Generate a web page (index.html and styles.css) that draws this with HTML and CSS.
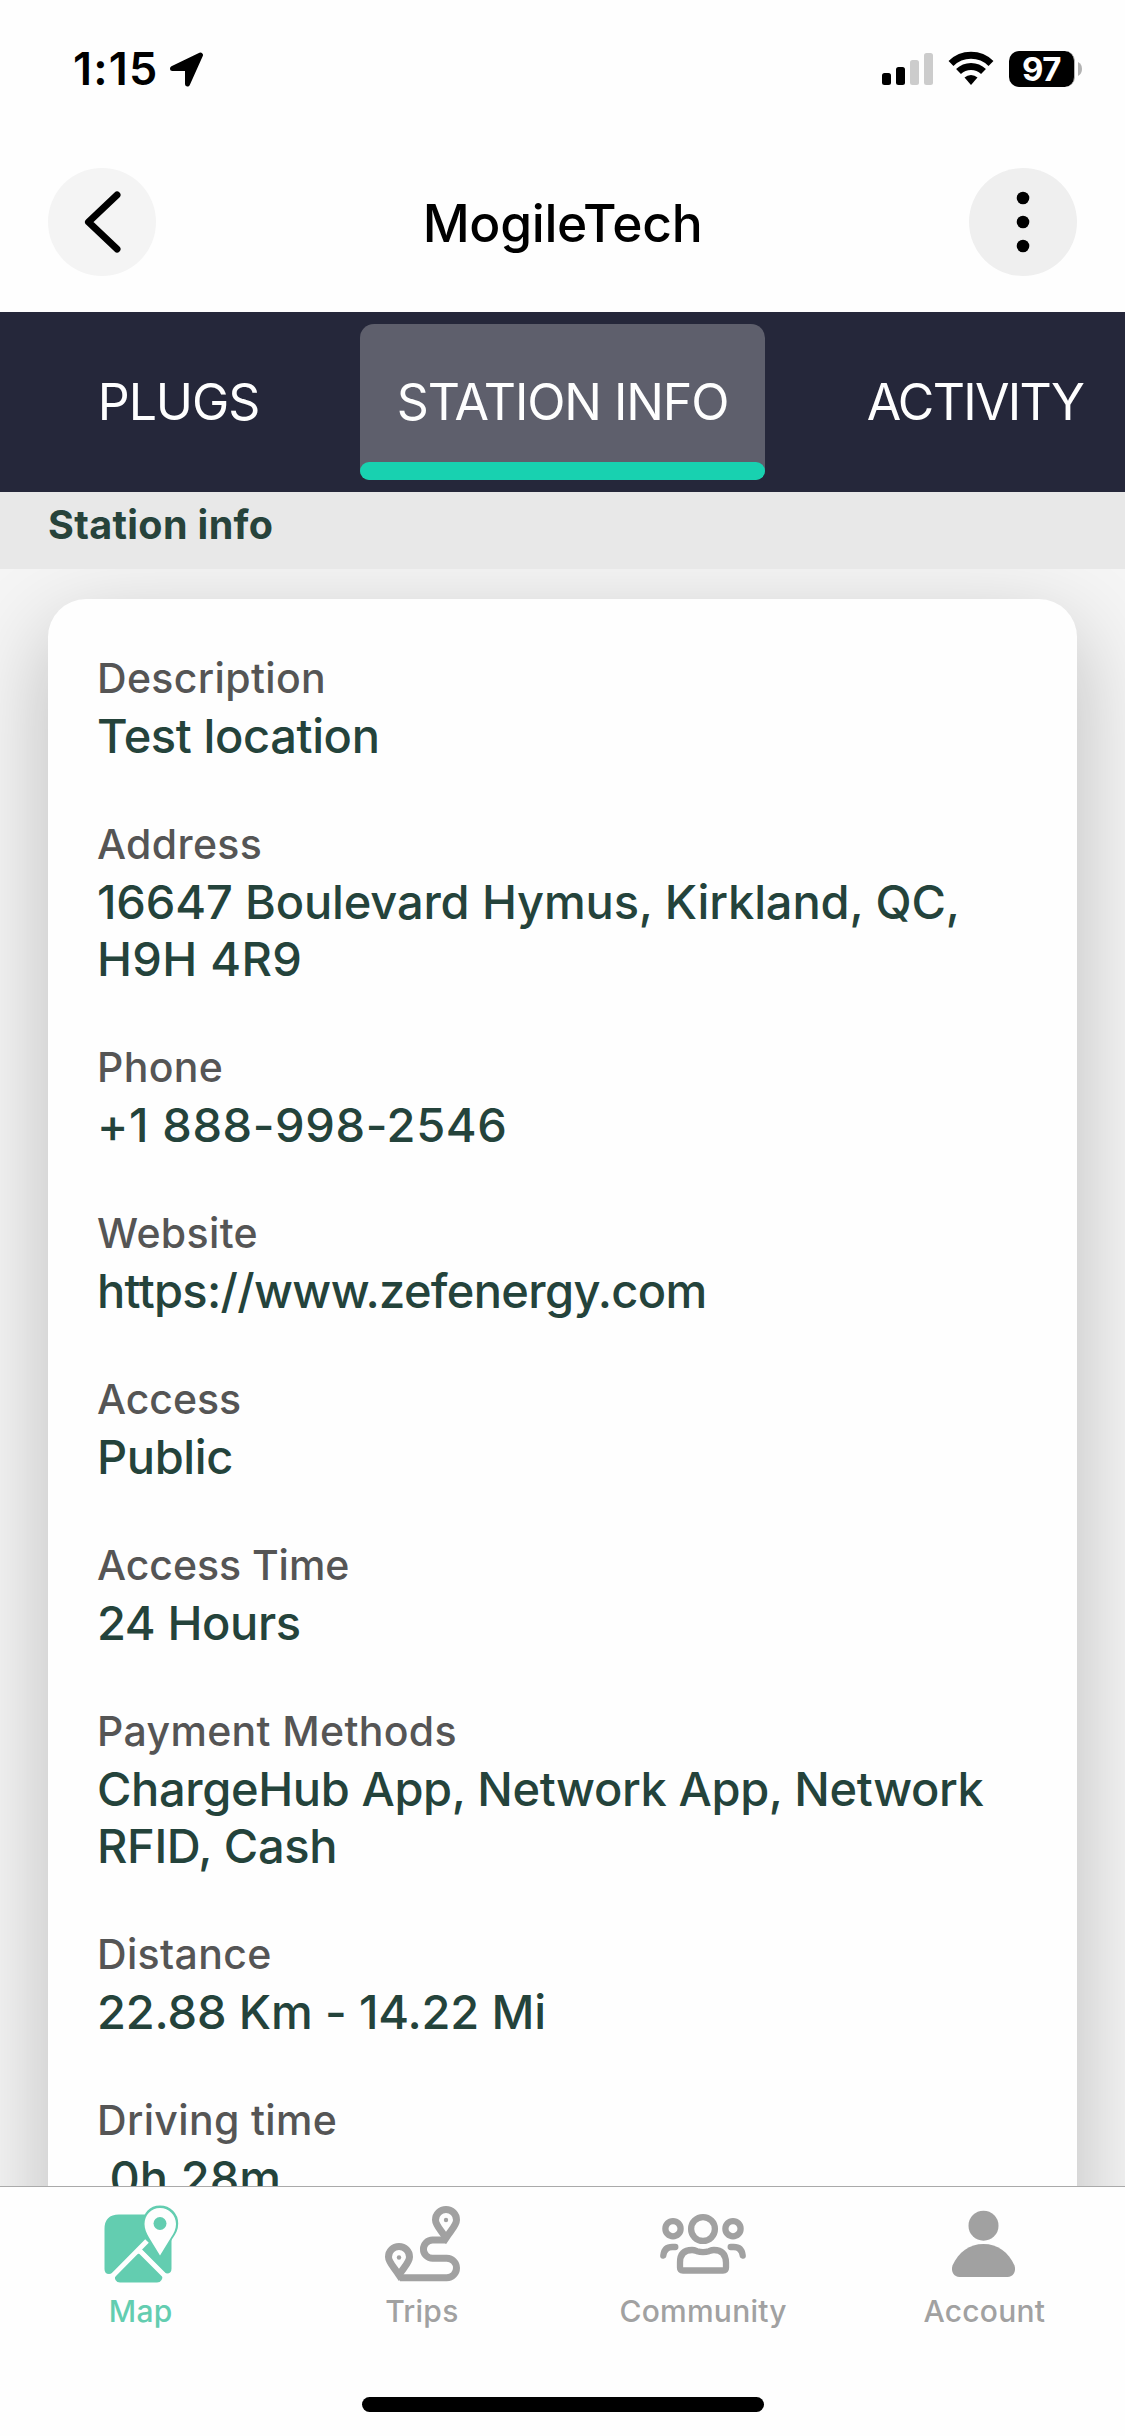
FILE: index.html
```html
<!DOCTYPE html>
<html lang="en">
<head>
<meta charset="utf-8">
<title>MogileTech</title>
<link rel="stylesheet" href="styles.css">
</head>
<body>
<div class="screen">
  <div class="status">
    <div class="status-left">
      <span class="clock">1:15</span>
      <svg class="location" width="36" height="38" viewBox="0 0 36 38"><path d="M3.500 19.500 31.500 6 18.500 35 18.500 19.500Z" stroke="#000" stroke-width="5" stroke-linejoin="round"/></svg>
    </div>
    <div class="status-right">
      <svg width="51" height="36" viewBox="0 0 51 36"><rect y="22" width="9" height="12" rx="2.500"/><rect x="14" y="16" width="9" height="18" rx="2.500"/><g fill="#ccc"><rect x="28" y="9" width="9" height="25" rx="2.500"/><rect x="42" y="2" width="9" height="32" rx="2.500"/></g></svg>
      <svg width="46" height="36" viewBox="0 0 46 36"><g fill="none" stroke="#000" stroke-width="7"><path d="M3 12.500a28.500 28.500 0 0 1 40 0"/><path d="M10.500 20.500a18 18 0 0 1 25 0"/></g><path d="M16.500 26.500a9.500 9.500 0 0 1 13 0L23 34Z"/></svg>
      <div class="battery"><span class="battery-level">97</span></div>
      <svg class="battery-cap" width="4" height="14" viewBox="0 0 4 14"><path d="M0 0q4 2 4 7t-4 7Z" fill="#b3b3b3"/></svg>
    </div>
  </div>

  <header class="header">
    <div class="round-button">
      <svg width="108" height="108" viewBox="0 0 108 108"><path d="M69 27 40.500 54 69 81" fill="none" stroke="#000" stroke-width="7" stroke-linecap="round" stroke-linejoin="round"/></svg>
    </div>
    <h1 class="title">MogileTech</h1>
    <div class="round-button menu-button">
      <svg width="108" height="108" viewBox="0 0 108 108"><circle cx="54" cy="30" r="6.300"/><circle cx="54" cy="54" r="6.300"/><circle cx="54" cy="78" r="6.300"/></svg>
    </div>
  </header>

  <nav class="tabs">
    <div class="tab first"><span class="tab-text plugs">PLUGS</span></div>
    <div class="tab active"><span class="tab-text station">STATION INFO</span></div>
    <div class="tab"><span class="tab-text activity">ACTIVITY</span></div>
  </nav>
  <h2 class="section">Station info</h2>

  <main class="content">
    <dl class="card">
      <div class="field description"><dt>Description</dt><dd>Test location</dd></div>
      <div class="field address"><dt>Address</dt><dd>16647 Boulevard Hymus, Kirkland, QC,<br><span class="postcode">H9H 4R9</span></dd></div>
      <div class="field phone"><dt>Phone</dt><dd>+1 888-998-2546</dd></div>
      <div class="field website"><dt>Website</dt><dd>https://www.zefenergy.com</dd></div>
      <div class="field access"><dt>Access</dt><dd>Public</dd></div>
      <div class="field access"><dt>Access Time</dt><dd>24 Hours</dd></div>
      <div class="field payment"><dt>Payment Methods</dt><dd>ChargeHub App, Network App, Network<br>RFID, Cash</dd></div>
      <div class="field distance"><dt>Distance</dt><dd>22.88 Km - 14.22 Mi</dd></div>
      <div class="field"><dt>Driving time</dt><dd>&nbsp;0h 28m</dd></div>
    </dl>
  </main>

  <footer class="bottom">
    <nav class="bottom-nav">
      <div class="nav-item selected">
        <svg width="90" height="90" viewBox="0 0 90 90"><path d="M23 15.500H60L75.500 40V69.500Q75.500 74.500 71 74.500 69 74.500 67 72.500L43 48 18 72.500Q16 75 13 75 8.500 75 8.500 70V30Q8.500 15.500 23 15.500Z" fill="currentColor"/><path d="M20.500 75.500 40 56Q43 53 46 56L65 75Q67.500 78 65.500 81 64 83.500 61 83.500H24Q21 83.500 19.500 81 18 78 20.500 75.500Z" fill="currentColor"/><path d="M15 78.500 51 42M42.500 50.500 70.500 78.500" stroke="#fefefe" stroke-width="5"/><path d="M64 7.500C54 7.500 47.700 15 47.700 24.500 47.700 31 50 35 53 40L64 59 75 40C79 34 81.200 31 81.200 24.500 81.200 15 74 7.500 64 7.500Z" fill="currentColor" stroke="currentColor" stroke-width="2"/><path d="M64 9C55 9 48.500 16 48.500 25 48.500 30 50.500 34 53 38.500L64 56.500 75 38.500C78 34 80 30 80 25 80 16 73 9 64 9Z" fill="#fefefe"/><circle cx="64" cy="24.500" r="6.500" fill="currentColor"/></svg>
        <span>Map</span>
      </div>
      <div class="nav-item">
        <svg width="90" height="90" viewBox="0 0 90 90"><g fill="none" stroke="currentColor" stroke-width="7"><path d="M69 10.500A10.500 10.500 0 0 0 58.500 21C58.500 26 63 30 69 39 75 30 79.500 26 79.500 21A10.500 10.500 0 0 0 69 10.500ZM22 47.500A10.500 10.500 0 0 0 11.500 58C11.500 63 16 67 22 76 28 67 32.500 63 32.500 58A10.500 10.500 0 0 0 22 47.500Z"/><path d="M69 41H55.600a9.150 9.150 0 0 0 0 18.300h14.200a9.700 9.700 0 0 1 0 19.400H23"/></g><g fill="currentColor"><circle cx="69" cy="21" r="2.200"/><circle cx="22" cy="58.500" r="2.200"/></g></svg>
        <span>Trips</span>
      </div>
      <div class="nav-item">
        <svg width="90" height="90" viewBox="0 0 90 90"><g fill="none" stroke="currentColor" stroke-width="6.300"><circle cx="45" cy="30" r="11.900"/><circle cx="15" cy="29.700" r="7.600"/><circle cx="75" cy="29.700" r="7.600"/><path d="M34 51q2 0 5 1.200q6 2 12 0 3-1.200 5-1.200 11.500 0 12 12.500v5q0 3-3 3H25q-3 0-3-3v-5q0-12.500 12-12.500Z"/><path d="M5.300 56.500q1-8.500 9-8.500h3M84.700 56.500q-1-8.500-9-8.500h-3" stroke-linecap="round"/></g></svg>
        <span>Community</span>
      </div>
      <div class="nav-item">
        <svg width="90" height="90" viewBox="0 0 90 90"><circle cx="44.500" cy="26.700" r="15" fill="currentColor"/><path d="M44.500 45c-14 0-25 8-31 21.500-2 6 1.500 11.500 7 11.500h48c5.500 0 9-5.500 7-11.500-6-13.500-17-21.500-31-21.500Z" fill="currentColor"/></svg>
        <span>Account</span>
      </div>
    </nav>
    <div class="home-indicator"></div>
  </footer>
</div>
</body>
</html>
```

FILE: styles.css
```css
* { box-sizing: border-box; }
body { margin: 0; background: #fefefe; font-family: Inter, sans-serif; }
svg { display: block; flex: none; }
.screen { width: 1125px; height: 2436px; display: flex; flex-direction: column; overflow: hidden; background: #fefefe; }
.status { height: 138px; flex: none; display: flex; justify-content: space-between; padding: 49px 43px 0 73px; }
.status-left, .status-right { display: flex; align-items: flex-start; }
.clock { font-size: 45px; line-height: 40px; font-weight: 600; letter-spacing: 1.2px; width: 96px; white-space: nowrap; }
.status-right { gap: 15px; padding-top: 2px; }
.battery { width: 66px; height: 36px; border-radius: 10px; background: #000; border-right: 1px solid #b3b3b3; color: #fefefe; text-align: center; }
.battery-level { display: block; font-size: 33px; line-height: 36px; font-weight: 700; letter-spacing: -0.5px; }
.battery-cap { margin: 11px 0 0 -12px; }
.header { height: 174px; flex: none; display: flex; align-items: flex-start; justify-content: space-between; padding: 30px 48px 0; }
.round-button { width: 108px; height: 108px; border-radius: 50%; background: #f4f4f4; }
.menu-button { background: #efefef; }
.title { margin: 0; font-weight: 480; font-size: 51.5px; line-height: 110px; letter-spacing: -0.3px; color: #000; }
.tabs { height: 180px; flex: none; display: grid; grid-template-columns: 360px 405px 420px; overflow: hidden; background: #25273a; padding: 12px 0; color: #fefefe; font-size: 50px; font-weight: 400; }
.tab { height: 156px; line-height: 156px; white-space: nowrap; text-align: center; }
.first { padding-right: 3px; }
.active { background: #5e5f6c; border-radius: 14px 14px 10px 10px; display: flex; flex-direction: column; align-items: center; }
.active .tab-text { height: 138px; }
.active::after { content: ""; width: 100%; height: 18px; border-radius: 9px; background: #18d1b0; }
.tab-text { display: inline-block; }
.plugs { letter-spacing: -1.1px; }
.station { letter-spacing: -1.1px; }
.activity { letter-spacing: -1.7px; }
.section { height: 77px; flex: none; margin: 0; padding: 8px 48px 0; background: #e8e8e8; color: #27433b; font-size: 39.5px; line-height: 50px; font-weight: 700; letter-spacing: 0.35px; }
.content { flex: 1; min-height: 0; overflow: hidden; background: #f5f5f5; padding: 30px 48px 0; }
.card { margin: 0; height: 2000px; border-radius: 38px; background: #fefefe; padding: 52px 49px; box-shadow: 0 30px 90px rgba(0,0,0,.24); }
.field { margin-bottom: 53px; }
dt { color: #555; font-size: 41px; line-height: 54px; font-weight: 460; letter-spacing: 0.35px; }
dd { margin: 0; color: #24433b; font-size: 47px; line-height: 57px; font-weight: 500; padding-top: 2px; white-space: nowrap; }
.description dd, .payment dd, .access dd { letter-spacing: -0.38px; }
.address dd { letter-spacing: -0.15px; }
.address .postcode { letter-spacing: 0.3px; }
.phone dd { letter-spacing: 0.6px; }
.website dd { letter-spacing: -0.66px; }
.distance dd { letter-spacing: -0.15px; }
.access dt { letter-spacing: -0.05px; }
.bottom { height: 250px; flex: none; border-top: 1px solid #aaa; background: #fefefe; display: flex; flex-direction: column; align-items: center; justify-content: space-between; padding-bottom: 24px; }
.bottom-nav { width: 100%; display: grid; grid-template-columns: repeat(4, 1fr); padding-top: 12px; }
.nav-item { color: #a1a1a1; display: flex; flex-direction: column; align-items: center; font-size: 30px; line-height: 40px; font-weight: 500; letter-spacing: 0.25px; }
.nav-item span { margin-top: 2px; }
.selected { color: #63cdb0; }
.home-indicator { width: 402px; height: 15px; border-radius: 8px; background: #000; }
```
